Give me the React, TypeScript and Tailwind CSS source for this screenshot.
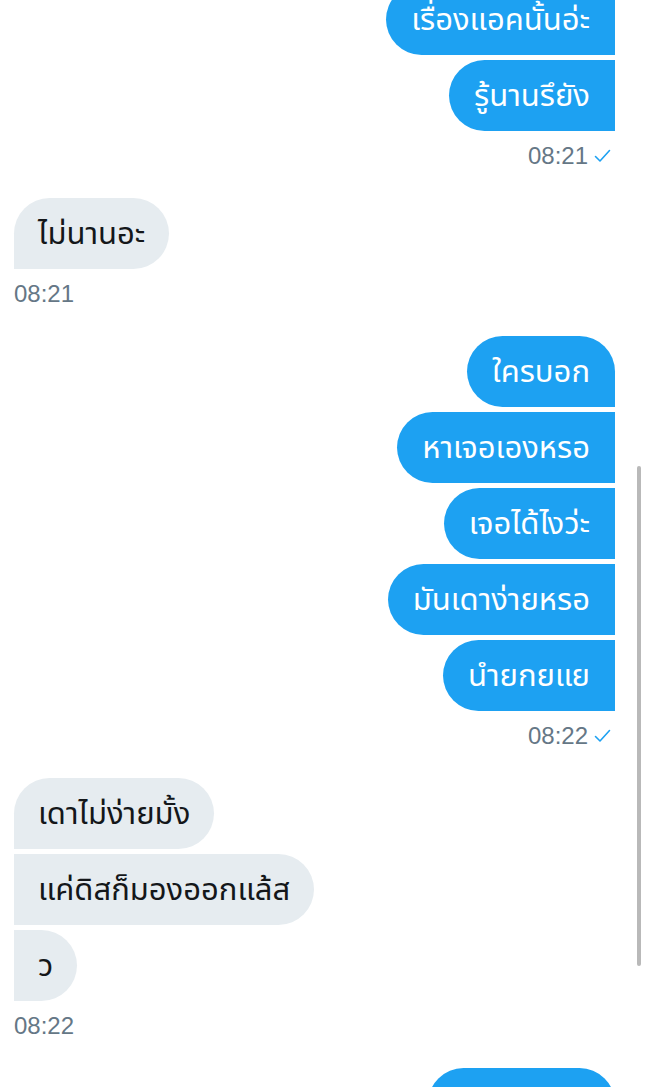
import React from "react";

type Msg = { text: string; first?: boolean };
type Group = { side: "me" | "them"; time?: string; msgs: Msg[] };

const groups: Group[] = [
  {
    side: "me",
    time: "08:21",
    msgs: [{ text: "เรื่องแอคนั้นอ่ะ" }, { text: "รู้นานรึยัง" }],
  },
  { side: "them", time: "08:21", msgs: [{ text: "ไม่นานอะ", first: true }] },
  {
    side: "me",
    time: "08:22",
    msgs: [
      { text: "ใครบอก", first: true },
      { text: "หาเจอเองหรอ" },
      { text: "เจอได้ไงว่ะ" },
      { text: "มันเดาง่ายหรอ" },
      { text: "นำยกยแย" },
    ],
  },
  {
    side: "them",
    time: "08:22",
    msgs: [
      { text: "เดาไม่ง่ายมั้ง", first: true },
      { text: "แค่ดิสก็มองออกแล้ส" },
      { text: "ว" },
    ],
  },
];

const Check = () => (
  <svg width="17" height="14" viewBox="0 0 17 14" className="ml-[6px]">
    <polyline
      points="1.5,7.5 6,12 15.5,1.5"
      fill="none"
      stroke="#1da1f2"
      strokeWidth="1.6"
      strokeLinecap="round"
      strokeLinejoin="round"
    />
  </svg>
);

const Bubble = ({ msg, side }: { msg: Msg; side: "me" | "them" }) => {
  if (side === "me") {
    return (
      <div
        className={`h-[71px] flex items-center pt-[3px] px-[25px] bg-[#1da1f2] text-white rounded-l-[36px] ${
          msg.first ? "rounded-tr-[36px]" : ""
        }`}
      >
        {msg.text}
      </div>
    );
  }
  return (
    <div
      className={`h-[71px] flex items-center pt-[3px] px-[24px] bg-[#e6ecf0] text-[#14171a] rounded-r-[36px] ${
        msg.first ? "rounded-tl-[36px]" : ""
      }`}
    >
      {msg.text}
    </div>
  );
};

export default function App() {
  return (
    <div className="relative w-[646px] h-[1087px] overflow-hidden bg-white font-['Noto_Sans_Thai','Noto_Sans','DejaVu_Sans',sans-serif]">
      <div className="flex flex-col pl-[14px] pr-[31px] mt-[-16px] gap-[30px] text-[31px]">
        {groups.map((g, i) => (
          <div
            key={i}
            className={`flex flex-col ${g.side === "me" ? "items-end" : "items-start"}`}
          >
            <div
              className={`flex flex-col gap-[5px] ${g.side === "me" ? "items-end" : "items-start"}`}
            >
              {g.msgs.map((m, j) => (
                <Bubble key={j} msg={m} side={g.side} />
              ))}
            </div>
            {g.time && (
              <div
                className={`mt-[13px] h-[24px] flex items-center text-[24px] text-[#657786] font-['Liberation_Sans',sans-serif] ${
                  g.side === "me" ? "pr-[4px]" : ""
                }`}
              >
                {g.time}
                {g.side === "me" && <Check />}
              </div>
            )}
          </div>
        ))}
        {/* next sent message, only its top edge is in view */}
        <div className="flex justify-end">
          <div className="w-[187px] h-[71px] bg-[#1da1f2] rounded-l-[36px] rounded-tr-[36px]" />
        </div>
      </div>
      {/* scroll thumb */}
      <div className="absolute left-[637px] top-[466px] w-[4px] h-[500px] rounded-full bg-[#b9b9b9]" />
    </div>
  );
}
